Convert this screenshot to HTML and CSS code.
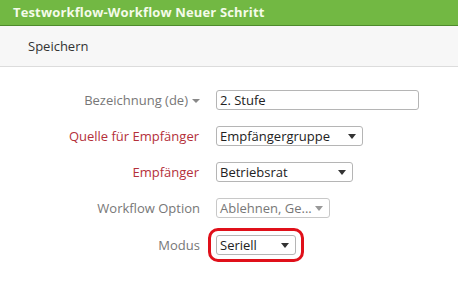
FILE: index.html
```html
<!DOCTYPE html>
<html lang="de">
<head>
    <meta charset="UTF-8">
    <title>Testworkflow-Workflow Neuer Schritt</title>
    <link rel="stylesheet" href="styles.css">
</head>
<body>
    <!-- Title bar -->
    <div class="titlebar">Testworkflow-Workflow Neuer Schritt</div>

    <!-- Toolbar -->
    <div class="toolbar">
        <a class="tool-btn">Speichern</a>
    </div>

    <!-- Form -->
    <div class="form">
        <div class="row">
            <label class="lbl">Bezeichnung (de) <span class="caret-lbl"></span></label>
            <div class="field"><div class="input wide">2. Stufe</div></div>
        </div>
        <div class="row">
            <label class="lbl required">Quelle für Empfänger</label>
            <div class="field"><div class="select w-group">Empfängergruppe<span class="caret"></span></div></div>
        </div>
        <div class="row">
            <label class="lbl required">Empfänger</label>
            <div class="field"><div class="select w-rat">Betriebsrat<span class="caret"></span></div></div>
        </div>
        <div class="row">
            <label class="lbl">Workflow Option</label>
            <div class="field"><div class="select w-opt disabled">Ablehnen, Ge...<span class="caret"></span></div></div>
        </div>
        <div class="row row-mode">
            <label class="lbl">Modus</label>
            <div class="field">
                <div class="highlight"><div class="select w-mode">Seriell<span class="caret"></span></div></div>
            </div>
        </div>
    </div>
</body>
</html>
```

FILE: styles.css
```css
body {
    margin: 0;
    font-family: 'Open Sans', 'Noto Sans', sans-serif;
    font-size: 13px;
    color: #333;
    background: #fff;
}

.titlebar {
    background-color: #72b843;
    border-bottom: 1px solid #4e8a2c;
    color: #f4fbe9;
    font-weight: bold;
    font-size: 13px;
    letter-spacing: 0.15px;
    height: 25px;
    line-height: 24px;
    padding-left: 13px;
}

.toolbar {
    background-color: #f7f7f7;
    border-bottom: 1px solid #dcdcdc;
    height: 40px;
    display: flex;
    align-items: center;
    padding-left: 28px;
}

.tool-btn {
    font-size: 13px;
    color: #333;
    cursor: pointer;
}

.form {
    padding-top: 15px;
}

.row {
    display: flex;
    align-items: center;
    height: 36px;
}

.row-mode {
    margin-top: 1px;
}

.lbl {
    width: 216px;
    text-align: right;
    color: #777;
    padding-right: 16px;
    box-sizing: border-box;
    display: flex;
    justify-content: flex-end;
    align-items: center;
    gap: 4px;
}

.lbl.required {
    color: #b4303a;
    padding-right: 17px;
}

.caret-lbl {
    width: 0;
    height: 0;
    border-left: 4px solid transparent;
    border-right: 4px solid transparent;
    border-top: 4px solid #888;
    margin-top: 1px;
}

.field {
    display: flex;
}

.input,
.select {
    height: 20px;
    box-sizing: border-box;
    border: 1px solid #b5b5b5;
    border-radius: 3px;
    background: #fff;
    padding: 0 6px 0 3px;
    line-height: 18px;
    color: #222;
    display: flex;
    align-items: center;
    justify-content: space-between;
}

.wide { width: 203px; }
.w-group { width: 147px; }
.w-rat { width: 137px; }
.w-opt { width: 114px; }
.w-mode { width: 80px; }

.select.disabled {
    color: #777;
    border-color: #c8c8c8;
}

.caret {
    width: 0;
    height: 0;
    border-left: 4px solid transparent;
    border-right: 4px solid transparent;
    border-top: 5px solid #333;
}

.disabled .caret {
    border-top-color: #999;
}

.highlight {
    border: 3px solid #e0101a;
    border-radius: 10px;
    padding: 4px 5px;
    margin: -7px 0 -7px -8px;
}
```
